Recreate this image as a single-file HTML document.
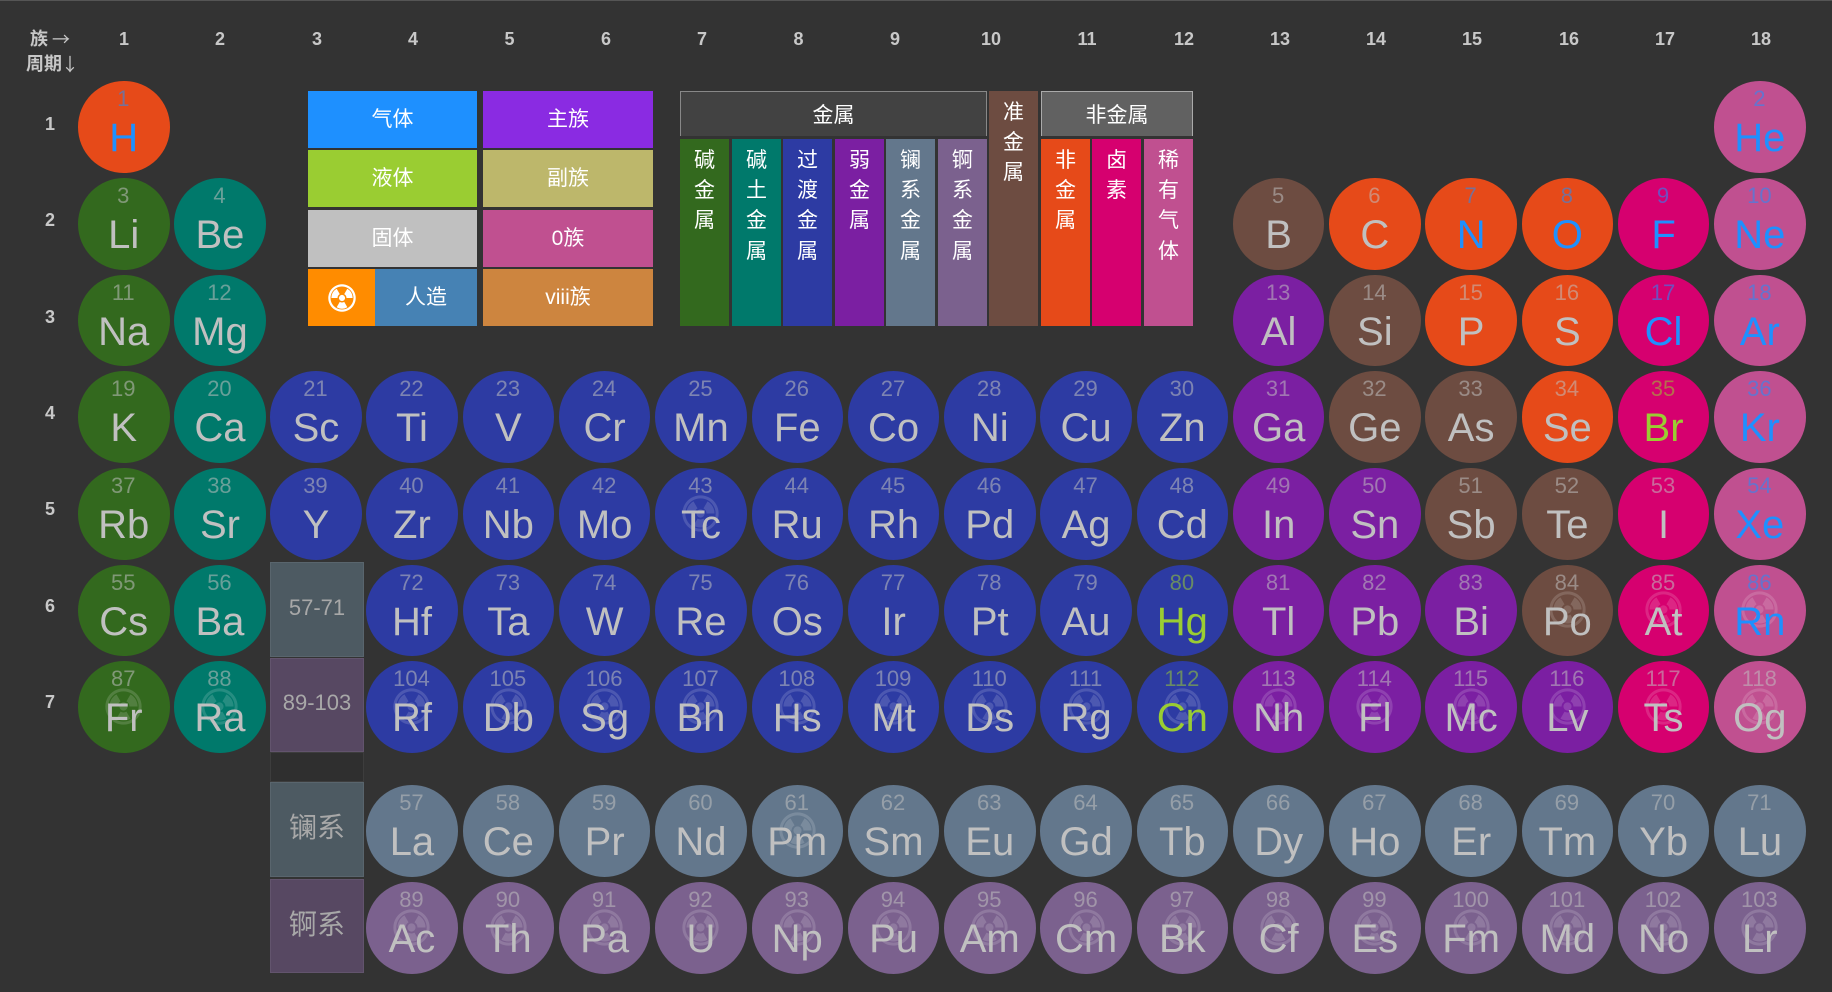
<!DOCTYPE html>
<html lang="zh"><head><meta charset="utf-8"><title>元素周期表</title>
<style>
*{box-sizing:border-box;margin:0;padding:0}
html,body{width:1832px;height:992px;overflow:hidden;background:#333}
body{position:relative;font-family:"Liberation Sans","Noto Sans CJK SC",sans-serif;border-top:1px solid #555;margin-top:0}
#w{position:absolute;left:0;top:-1px;width:1832px;height:992px}
.e{position:absolute;width:91.5px;height:91.5px;border-radius:50%;color:silver}
.e b{position:absolute;left:-1px;right:0;top:6px;font:22px/24px "Liberation Sans",sans-serif;text-align:center;opacity:.55}
.e u{position:absolute;left:0;right:0;top:34px;font:40px/46px "Liberation Sans",sans-serif;text-align:center;text-decoration:none}
.e svg{position:absolute;left:27.25px;top:26.5px;width:37px;height:37px;opacity:.15;fill:#fff}
.gas{color:#1e90ff}.liq{color:#9acd32}
.a{background:#33691e}.d{background:#00796b}.t{background:#2d3ba3}.p{background:#7b1fa2}.l{background:#63778c}.k{background:#7b618e}.m{background:#6d4c41}.n{background:#e64a19}.h{background:#d6006f}.g{background:#c05090}
.c1{left:78px}.c2{left:174.2px}.c3{left:270.2px}.c4{left:366.2px}.c5{left:462.6px}.c6{left:558.9px}.c7{left:655.2px}.c8{left:751.5px}.c9{left:847.8px}.c10{left:944px}.c11{left:1040.3px}.c12{left:1136.6px}.c13{left:1232.9px}.c14{left:1329.1px}.c15{left:1425.4px}.c16{left:1521.6px}.c17{left:1617.8px}.c18{left:1714.1px}
.y1{top:81px}.y2{top:178px}.y3{top:274.5px}.y4{top:371px}.y5{top:468px}.y6{top:564.5px}.y7{top:661px}.y8{top:785px}.y9{top:882px}
.hd{position:absolute;top:29px;width:40px;text-align:center;font:bold 18px/20px "Liberation Sans","Noto Sans CJK SC",sans-serif;color:#c8c8c8;white-space:nowrap}
.ar{position:absolute;font:18px/20px "Noto Sans CJK SC",sans-serif;color:#c8c8c8}
.rw{position:absolute;left:30px;width:40px;text-align:center;font:bold 18px/20px "Liberation Sans",sans-serif;color:#c8c8c8}
.lb{position:absolute;font-size:21px;color:#fff;text-align:center;display:flex;align-items:center;justify-content:center;padding-bottom:4px}
.v{position:absolute;top:139px;height:187px;padding-top:7px;color:#fff;font-size:21px;line-height:30.2px;text-align:center}
.s{position:absolute;left:270px;width:94px;color:#a8a8a8;text-align:center;border:1px solid rgba(255,255,255,.07)}
</style></head><body>
<svg width="0" height="0" style="position:absolute"><defs><symbol id="r" viewBox="0 0 100 100"><path fill-rule="evenodd" d="M50 1a49 49 0 1 0 .01 0ZM50 9a41 41 0 1 1-.01 0Z"/><path d="M66 50L88 50A38 38 0 0 0 69 17.1L58 36.14A16 16 0 0 1 66 50Z"/><path d="M42 36.14L31 17.1A38 38 0 0 0 12 50L34 50A16 16 0 0 1 42 36.14Z"/><path d="M42 63.86L31 82.9A38 38 0 0 0 69 82.9L58 63.86A16 16 0 0 1 42 63.86Z"/><circle cx="50" cy="50" r="11"/></symbol></defs></svg>
<div id="w">
<div class="hd" style="left:30px;width:auto">族</div><div class="ar" style="left:52px;top:29px">→</div>
<div class="hd" style="left:26px;top:54px;width:auto">周期</div><div class="ar" style="left:61px;top:54px">↓</div>
<div class="hd" style="left:104px">1</div><div class="hd" style="left:200px">2</div><div class="hd" style="left:297px">3</div><div class="hd" style="left:393px">4</div><div class="hd" style="left:489.5px">5</div><div class="hd" style="left:586px">6</div><div class="hd" style="left:682px">7</div><div class="hd" style="left:778.5px">8</div><div class="hd" style="left:875px">9</div><div class="hd" style="left:971px">10</div><div class="hd" style="left:1067px">11</div><div class="hd" style="left:1164px">12</div><div class="hd" style="left:1260px">13</div><div class="hd" style="left:1356px">14</div><div class="hd" style="left:1452px">15</div><div class="hd" style="left:1549px">16</div><div class="hd" style="left:1645px">17</div><div class="hd" style="left:1741px">18</div>
<div class="rw" style="top:114px">1</div><div class="rw" style="top:210px">2</div><div class="rw" style="top:307px">3</div><div class="rw" style="top:403px">4</div><div class="rw" style="top:499px">5</div><div class="rw" style="top:596px">6</div><div class="rw" style="top:692px">7</div>

<div class="lb" style="left:308px;top:91px;width:169px;height:57px;background:#1e90ff">气体</div>
<div class="lb" style="left:308px;top:150px;width:169px;height:57px;background:#9acd32">液体</div>
<div class="lb" style="left:308px;top:210px;width:169px;height:57px;background:silver">固体</div>
<div class="lb" style="left:308px;top:269px;width:67px;height:57px;background:#ff8c00;padding:0"><svg width="28" height="28" style="fill:#fff"><use href="#r"/></svg></div>
<div class="lb" style="left:375px;top:269px;width:102px;height:57px;background:#4682b4">人造</div>
<div class="lb" style="left:483px;top:91px;width:170px;height:57px;background:#8a2be2">主族</div>
<div class="lb" style="left:483px;top:150px;width:170px;height:57px;background:#bdb76b">副族</div>
<div class="lb" style="left:483px;top:210px;width:170px;height:57px;background:#c05090">0族</div>
<div class="lb" style="left:483px;top:269px;width:170px;height:57px;background:#cd853f">viii族</div>

<div class="lb" style="left:680px;top:91px;width:307px;height:45px;background:#424242;border:1px solid #888;border-bottom:0;padding-bottom:0">金属</div>
<div class="lb" style="left:1041px;top:91px;width:152px;height:45px;background:#616161;border:1px solid #aaa;border-bottom:0;padding-bottom:0">非金属</div>
<div class="v m" style="left:989px;top:91px;width:49px;height:235px;padding-top:7px">准<br>金<br>属</div>
<div class="v a" style="left:680px;width:49px">碱<br>金<br>属</div>
<div class="v d" style="left:732px;width:49px">碱<br>土<br>金<br>属</div>
<div class="v t" style="left:783px;width:49px">过<br>渡<br>金<br>属</div>
<div class="v p" style="left:835px;width:49px">弱<br>金<br>属</div>
<div class="v l" style="left:886px;width:49px">镧<br>系<br>金<br>属</div>
<div class="v k" style="left:938px;width:49px">锕<br>系<br>金<br>属</div>
<div class="v n" style="left:1041px;width:49px">非<br>金<br>属</div>
<div class="v h" style="left:1092px;width:49px">卤<br>素</div>
<div class="v g" style="left:1144px;width:49px">稀<br>有<br>气<br>体</div>

<div class="s" style="top:562px;height:95px;background:#4d5a62;font-size:22px;line-height:90px">57-71</div>
<div class="s" style="top:657.5px;height:94.5px;background:#574862;font-size:22px;line-height:88px">89-103</div>
<div class="s" style="top:752px;height:30px;background:#2f2f2f"></div>
<div class="s" style="top:782px;height:95px;background:#4d5a62;font-size:28px;line-height:90px">镧系</div>
<div class="s" style="top:879px;height:94px;background:#574862;font-size:28px;line-height:90px">锕系</div>

<div class="e n c1 y1 gas"><b>1</b><u>H</u></div>
<div class="e g c18 y1 gas"><b>2</b><u>He</u></div>

<div class="e a c1 y2"><b>3</b><u>Li</u></div>
<div class="e d c2 y2"><b>4</b><u>Be</u></div>
<div class="e m c13 y2"><b>5</b><u>B</u></div>
<div class="e n c14 y2"><b>6</b><u>C</u></div>
<div class="e n c15 y2 gas"><b>7</b><u>N</u></div>
<div class="e n c16 y2 gas"><b>8</b><u>O</u></div>
<div class="e h c17 y2 gas"><b>9</b><u>F</u></div>
<div class="e g c18 y2 gas"><b>10</b><u>Ne</u></div>

<div class="e a c1 y3"><b>11</b><u>Na</u></div>
<div class="e d c2 y3"><b>12</b><u>Mg</u></div>
<div class="e p c13 y3"><b>13</b><u>Al</u></div>
<div class="e m c14 y3"><b>14</b><u>Si</u></div>
<div class="e n c15 y3"><b>15</b><u>P</u></div>
<div class="e n c16 y3"><b>16</b><u>S</u></div>
<div class="e h c17 y3 gas"><b>17</b><u>Cl</u></div>
<div class="e g c18 y3 gas"><b>18</b><u>Ar</u></div>

<div class="e a c1 y4"><b>19</b><u>K</u></div>
<div class="e d c2 y4"><b>20</b><u>Ca</u></div>
<div class="e t c3 y4"><b>21</b><u>Sc</u></div>
<div class="e t c4 y4"><b>22</b><u>Ti</u></div>
<div class="e t c5 y4"><b>23</b><u>V</u></div>
<div class="e t c6 y4"><b>24</b><u>Cr</u></div>
<div class="e t c7 y4"><b>25</b><u>Mn</u></div>
<div class="e t c8 y4"><b>26</b><u>Fe</u></div>
<div class="e t c9 y4"><b>27</b><u>Co</u></div>
<div class="e t c10 y4"><b>28</b><u>Ni</u></div>
<div class="e t c11 y4"><b>29</b><u>Cu</u></div>
<div class="e t c12 y4"><b>30</b><u>Zn</u></div>
<div class="e p c13 y4"><b>31</b><u>Ga</u></div>
<div class="e m c14 y4"><b>32</b><u>Ge</u></div>
<div class="e m c15 y4"><b>33</b><u>As</u></div>
<div class="e n c16 y4"><b>34</b><u>Se</u></div>
<div class="e h c17 y4 liq"><b>35</b><u>Br</u></div>
<div class="e g c18 y4 gas"><b>36</b><u>Kr</u></div>

<div class="e a c1 y5"><b>37</b><u>Rb</u></div>
<div class="e d c2 y5"><b>38</b><u>Sr</u></div>
<div class="e t c3 y5"><b>39</b><u>Y</u></div>
<div class="e t c4 y5"><b>40</b><u>Zr</u></div>
<div class="e t c5 y5"><b>41</b><u>Nb</u></div>
<div class="e t c6 y5"><b>42</b><u>Mo</u></div>
<div class="e t c7 y5"><svg><use href="#r"/></svg><b>43</b><u>Tc</u></div>
<div class="e t c8 y5"><b>44</b><u>Ru</u></div>
<div class="e t c9 y5"><b>45</b><u>Rh</u></div>
<div class="e t c10 y5"><b>46</b><u>Pd</u></div>
<div class="e t c11 y5"><b>47</b><u>Ag</u></div>
<div class="e t c12 y5"><b>48</b><u>Cd</u></div>
<div class="e p c13 y5"><b>49</b><u>In</u></div>
<div class="e p c14 y5"><b>50</b><u>Sn</u></div>
<div class="e m c15 y5"><b>51</b><u>Sb</u></div>
<div class="e m c16 y5"><b>52</b><u>Te</u></div>
<div class="e h c17 y5"><b>53</b><u>I</u></div>
<div class="e g c18 y5 gas"><b>54</b><u>Xe</u></div>

<div class="e a c1 y6"><b>55</b><u>Cs</u></div>
<div class="e d c2 y6"><b>56</b><u>Ba</u></div>
<div class="e t c4 y6"><b>72</b><u>Hf</u></div>
<div class="e t c5 y6"><b>73</b><u>Ta</u></div>
<div class="e t c6 y6"><b>74</b><u>W</u></div>
<div class="e t c7 y6"><b>75</b><u>Re</u></div>
<div class="e t c8 y6"><b>76</b><u>Os</u></div>
<div class="e t c9 y6"><b>77</b><u>Ir</u></div>
<div class="e t c10 y6"><b>78</b><u>Pt</u></div>
<div class="e t c11 y6"><b>79</b><u>Au</u></div>
<div class="e t c12 y6 liq"><b>80</b><u>Hg</u></div>
<div class="e p c13 y6"><b>81</b><u>Tl</u></div>
<div class="e p c14 y6"><b>82</b><u>Pb</u></div>
<div class="e p c15 y6"><b>83</b><u>Bi</u></div>
<div class="e m c16 y6"><svg><use href="#r"/></svg><b>84</b><u>Po</u></div>
<div class="e h c17 y6"><svg><use href="#r"/></svg><b>85</b><u>At</u></div>
<div class="e g c18 y6 gas"><svg><use href="#r"/></svg><b>86</b><u>Rn</u></div>

<div class="e a c1 y7"><svg><use href="#r"/></svg><b>87</b><u>Fr</u></div>
<div class="e d c2 y7"><svg><use href="#r"/></svg><b>88</b><u>Ra</u></div>
<div class="e t c4 y7"><svg><use href="#r"/></svg><b>104</b><u>Rf</u></div>
<div class="e t c5 y7"><svg><use href="#r"/></svg><b>105</b><u>Db</u></div>
<div class="e t c6 y7"><svg><use href="#r"/></svg><b>106</b><u>Sg</u></div>
<div class="e t c7 y7"><svg><use href="#r"/></svg><b>107</b><u>Bh</u></div>
<div class="e t c8 y7"><svg><use href="#r"/></svg><b>108</b><u>Hs</u></div>
<div class="e t c9 y7"><svg><use href="#r"/></svg><b>109</b><u>Mt</u></div>
<div class="e t c10 y7"><svg><use href="#r"/></svg><b>110</b><u>Ds</u></div>
<div class="e t c11 y7"><svg><use href="#r"/></svg><b>111</b><u>Rg</u></div>
<div class="e t c12 y7 liq"><svg><use href="#r"/></svg><b>112</b><u>Cn</u></div>
<div class="e p c13 y7"><svg><use href="#r"/></svg><b>113</b><u>Nh</u></div>
<div class="e p c14 y7"><svg><use href="#r"/></svg><b>114</b><u>Fl</u></div>
<div class="e p c15 y7"><svg><use href="#r"/></svg><b>115</b><u>Mc</u></div>
<div class="e p c16 y7"><svg><use href="#r"/></svg><b>116</b><u>Lv</u></div>
<div class="e h c17 y7"><svg><use href="#r"/></svg><b>117</b><u>Ts</u></div>
<div class="e g c18 y7"><svg><use href="#r"/></svg><b>118</b><u>Og</u></div>

<div class="e l c4 y8"><b>57</b><u>La</u></div>
<div class="e l c5 y8"><b>58</b><u>Ce</u></div>
<div class="e l c6 y8"><b>59</b><u>Pr</u></div>
<div class="e l c7 y8"><b>60</b><u>Nd</u></div>
<div class="e l c8 y8"><svg><use href="#r"/></svg><b>61</b><u>Pm</u></div>
<div class="e l c9 y8"><b>62</b><u>Sm</u></div>
<div class="e l c10 y8"><b>63</b><u>Eu</u></div>
<div class="e l c11 y8"><b>64</b><u>Gd</u></div>
<div class="e l c12 y8"><b>65</b><u>Tb</u></div>
<div class="e l c13 y8"><b>66</b><u>Dy</u></div>
<div class="e l c14 y8"><b>67</b><u>Ho</u></div>
<div class="e l c15 y8"><b>68</b><u>Er</u></div>
<div class="e l c16 y8"><b>69</b><u>Tm</u></div>
<div class="e l c17 y8"><b>70</b><u>Yb</u></div>
<div class="e l c18 y8"><b>71</b><u>Lu</u></div>

<div class="e k c4 y9"><svg><use href="#r"/></svg><b>89</b><u>Ac</u></div>
<div class="e k c5 y9"><svg><use href="#r"/></svg><b>90</b><u>Th</u></div>
<div class="e k c6 y9"><svg><use href="#r"/></svg><b>91</b><u>Pa</u></div>
<div class="e k c7 y9"><svg><use href="#r"/></svg><b>92</b><u>U</u></div>
<div class="e k c8 y9"><svg><use href="#r"/></svg><b>93</b><u>Np</u></div>
<div class="e k c9 y9"><svg><use href="#r"/></svg><b>94</b><u>Pu</u></div>
<div class="e k c10 y9"><svg><use href="#r"/></svg><b>95</b><u>Am</u></div>
<div class="e k c11 y9"><svg><use href="#r"/></svg><b>96</b><u>Cm</u></div>
<div class="e k c12 y9"><svg><use href="#r"/></svg><b>97</b><u>Bk</u></div>
<div class="e k c13 y9"><svg><use href="#r"/></svg><b>98</b><u>Cf</u></div>
<div class="e k c14 y9"><svg><use href="#r"/></svg><b>99</b><u>Es</u></div>
<div class="e k c15 y9"><svg><use href="#r"/></svg><b>100</b><u>Fm</u></div>
<div class="e k c16 y9"><svg><use href="#r"/></svg><b>101</b><u>Md</u></div>
<div class="e k c17 y9"><svg><use href="#r"/></svg><b>102</b><u>No</u></div>
<div class="e k c18 y9"><svg><use href="#r"/></svg><b>103</b><u>Lr</u></div>
</div>
</body></html>
